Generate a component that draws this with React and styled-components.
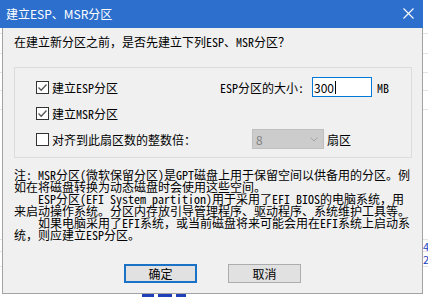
import React from 'react';
import styled, { createGlobalStyle } from 'styled-components';

const Global = createGlobalStyle`
  html, body { margin: 0; padding: 0; background: #ffffff; }
  body { width: 428px; height: 297px; overflow: hidden; }
  * { box-sizing: border-box; }
`;

const SONG = `"Noto Sans Mono CJK SC", "Noto Sans CJK SC", monospace`;
const UI = `"Noto Sans CJK SC", "Noto Sans", sans-serif`;

const Screen = styled.div`
  position: relative;
  width: 428px;
  height: 297px;
  overflow: hidden;
  background: #ffffff;
`;

const Backdrop = styled.div`
  display: flex;
  flex-direction: column;
  padding-top: 33px;
`;

const BackRow = styled.div`
  height: ${p => p.$h || 19}px;
  border-top: 1px solid #e4e4e4;
  display: flex;
  justify-content: flex-end;
  align-items: center;
  font: 11px ${UI};
  color: #1a3fbf;
`;

const BackCell = styled.span`
  width: 5px;
  overflow: hidden;
  white-space: nowrap;
`;

const BottomStrip = styled.div`
  display: flex;
  padding-left: 142px;
  gap: 4px;
`;

const BlueBit = styled.span`
  width: ${p => p.$w}px;
  height: 3px;
  background: #1f3fb8;
`;

const Dialog = styled.div`
  position: absolute;
  left: 0;
  top: 0;
  width: 423px;
  height: 294px;
  display: flex;
  flex-direction: column;
`;

const TitleBar = styled.div`
  height: 28px;
  flex: none;
  background: #2c6fcd;
  display: flex;
  align-items: center;
  justify-content: space-between;
  padding: 0 9px 1px 6px;
  color: #ffffff;
  font: 12px ${UI};
`;

const Body = styled.div`
  flex: 1;
  margin-left: 2px;
  background: #f0f0f0;
  border: 1px solid #a3a3a3;
  border-top: none;
  padding: 7px 10px 0 11px;
  display: flex;
  flex-direction: column;
  font: 12px ${SONG};
  color: #000000;
`;

const Question = styled.div`
  line-height: 14px;
  height: 14px;
  white-space: nowrap;
`;

const GroupBox = styled.div`
  margin-top: 18px;
  height: 91px;
  border: 1px solid #dcdcdc;
  padding: 6px 0 0 21px;
  display: grid;
  grid-template-columns: 184px 1fr;
  grid-auto-rows: 26px;
  align-items: center;
`;

const CheckRow = styled.label`
  display: flex;
  align-items: center;
  gap: 3px;
  white-space: nowrap;
`;

const Box = styled.span`
  width: 13px;
  height: 13px;
  border: 1px solid #333333;
  background: #ffffff;
  display: flex;
  align-items: center;
  justify-content: center;
`;

const RightCell = styled.div`
  display: flex;
  align-items: center;
  padding-left: ${p => p.$indent || 0}px;
  white-space: nowrap;
`;

const FieldLabel = styled.span`
  width: 92px;
`;

const TextBox = styled.div`
  width: 60px;
  height: 20px;
  background: #ffffff;
  border: 1px solid #0078d7;
  display: flex;
  align-items: center;
  padding-left: 1px;
  font: 12px ${UI};
`;

const Caret = styled.span`
  width: 1px;
  height: 13px;
  background: #000;
  margin-left: 1px;
`;

const Unit = styled.span`
  margin-left: ${p => p.$gap}px;
`;

const Select = styled.div`
  width: 72px;
  height: 20px;
  background: #cccccc;
  border: 1px solid #bfbfbf;
  display: flex;
  align-items: center;
  justify-content: space-between;
  padding: 0 5px 0 3px;
  color: #838383;
  font: 12px ${UI};
`;

const Note = styled.div`
  margin-top: 11px;
  line-height: 12px;
  display: flex;
  flex-direction: column;
`;

const NoteLine = styled.div`
  white-space: pre;
  height: 12px;
`;

const Buttons = styled.div`
  margin-top: 23px;
  padding-left: 110px;
  display: flex;
  gap: 31px;
`;

const Button = styled.button`
  width: 73px;
  height: 19px;
  padding: 0;
  background: #e1e1e1;
  border: ${p => (p.$primary ? '2px solid #1a72c6' : '1px solid #adadad')};
  font: 12px ${SONG};
  color: #000;
  display: flex;
  align-items: center;
  justify-content: center;
`;

const Check = ({ checked }) => (
  <Box>
    {checked && (
      <svg width="11" height="11" viewBox="0 0 11 11">
        <path d="M1.5 5.5 L4.2 8.2 L9.5 2.5" fill="none" stroke="#555" strokeWidth="1.3" />
      </svg>
    )}
  </Box>
);

const noteLines = [
  '注: MSR分区(微软保留分区)是GPT磁盘上用于保留空间以供备用的分区。例',
  '如在将磁盘转换为动态磁盘时会使用这些空间。',
  '　　ESP分区(EFI System partition)用于采用了EFI BIOS的电脑系统，用',
  '来启动操作系统。分区内存放引导管理程序、驱动程序、系统维护工具等。',
  '　　如果电脑采用了EFI系统，或当前磁盘将来可能会用在EFI系统上启动系',
  '统，则应建立ESP分区。',
];

export default function App() {
  return (
    <Screen>
      <Global />
      <Backdrop>
        <BackRow $h={20} />
        <BackRow $h={19} />
        <BackRow $h={18} />
        <BackRow $h={19} />
        <BackRow $h={130} />
        <BackRow $h={12}><BackCell>47</BackCell></BackRow>
        <BackRow $h={15}><BackCell>2</BackCell></BackRow>
        <BackRow $h={28} />
        <BottomStrip>
          <BlueBit $w={12} />
          <BlueBit $w={14} />
          <BlueBit $w={10} />
        </BottomStrip>
      </Backdrop>
      <Dialog>
        <TitleBar>
          <span>建立ESP、MSR分区</span>
          <svg width="11" height="11" viewBox="0 0 11 11">
            <path d="M0.5 0.5 L10.5 10.5 M10.5 0.5 L0.5 10.5" stroke="#ffffff" strokeWidth="1.1" />
          </svg>
        </TitleBar>
        <Body>
          <Question>在建立新分区之前，是否先建立下列ESP、MSR分区？</Question>
          <GroupBox>
            <CheckRow>
              <Check checked />
              <span>建立ESP分区</span>
            </CheckRow>
            <RightCell>
              <FieldLabel>ESP分区的大小:</FieldLabel>
              <TextBox>
                300<Caret />
              </TextBox>
              <Unit $gap={5}>MB</Unit>
            </RightCell>
            <CheckRow>
              <Check checked />
              <span>建立MSR分区</span>
            </CheckRow>
            <RightCell />
            <CheckRow>
              <Check />
              <span>对齐到此扇区数的整数倍：</span>
            </CheckRow>
            <RightCell $indent={32}>
              <Select>
                <span>8</span>
                <svg width="8" height="5" viewBox="0 0 8 5">
                  <path d="M0.5 0.5 L4 4 L7.5 0.5" fill="none" stroke="#a6a6a6" strokeWidth="1" />
                </svg>
              </Select>
              <Unit $gap={3}>扇区</Unit>
            </RightCell>
          </GroupBox>
          <Note>
            {noteLines.map((l, i) => (
              <NoteLine key={i}>{l}</NoteLine>
            ))}
          </Note>
          <Buttons>
            <Button $primary>确定</Button>
            <Button>取消</Button>
          </Buttons>
        </Body>
      </Dialog>
    </Screen>
  );
}
